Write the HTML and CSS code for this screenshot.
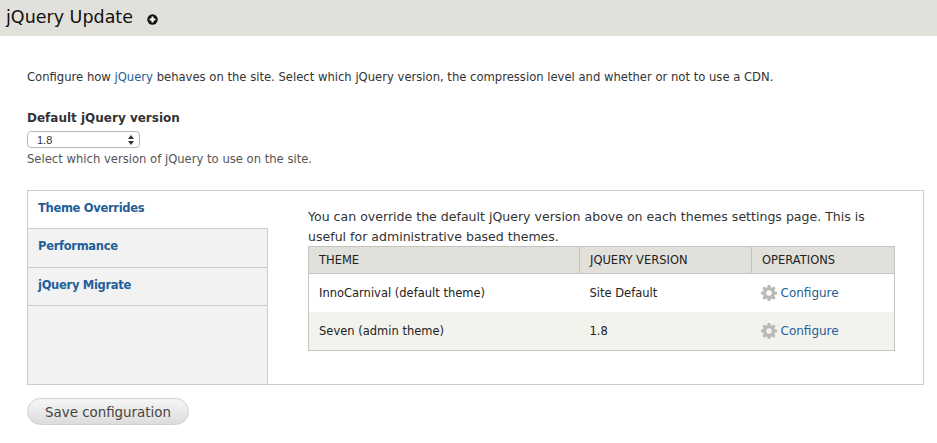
FILE: index.html
```html
<!DOCTYPE html>
<html lang="en">
<head>
<meta charset="utf-8">
<title>jQuery Update</title>
<link rel="stylesheet" href="styles.css">
</head>
<body>
<header class="page-header">
  <h1 class="page-title">jQuery Update</h1>
  <svg class="add-icon" width="11" height="11" viewBox="0 0 11 11"><circle cx="5.5" cy="5.5" r="5.2" fill="#111"/><path d="M5.5 2.6v5.8M2.6 5.5h5.8" stroke="#fff" stroke-width="2"/></svg>
</header>
<main class="content">
  <p class="intro">Configure how <a href="#">jQuery</a> behaves on the site. Select which jQuery version, the compression level and whether or not to use a CDN.</p>
  <div class="field">
    <label class="field-label">Default jQuery version</label>
    <div class="select-box"><span>1.8</span>
      <svg width="6" height="10" viewBox="0 0 6 10"><path d="M3 0l3 4H0zM3 10L0 6h6z" fill="#333"/></svg>
    </div>
    <div class="field-help">Select which version of jQuery to use on the site.</div>
  </div>
  <section class="tabs">
    <nav class="tab-list">
      <a class="tab tab-active" href="#">Theme Overrides</a>
      <a class="tab tab-second" href="#">Performance</a>
      <a class="tab tab-third" href="#">jQuery Migrate</a>
    </nav>
    <div class="tab-pane">
      <p class="pane-text">You can override the default jQuery version above on each themes settings page. This is useful for administrative based themes.</p>
      <table class="themes">
        <colgroup><col class="col-a"><col class="col-b"><col class="col-c"></colgroup>
        <thead><tr><th>THEME</th><th>JQUERY VERSION</th><th>OPERATIONS</th></tr></thead>
        <tbody>
          <tr><td>InnoCarnival (default theme)</td><td>Site Default</td><td>
            <a class="op" href="#"><svg class="gear" width="16" height="16" viewBox="0 0 16 16"><path d="M6.7 0h2.6l.4 2.3 1.2.5 1.9-1.3 1.8 1.8-1.3 1.9.5 1.2 2.2.4v2.6l-2.2.4-.5 1.2 1.3 1.9-1.8 1.8-1.9-1.3-1.2.5-.4 2.2H6.7l-.4-2.2-1.2-.5-1.9 1.3-1.8-1.8 1.3-1.9-.5-1.2L0 9.300V6.700l2.200-.4.5-1.200-1.300-1.900 1.800-1.800 1.900 1.300 1.200-.5z M8 5.200a2.800 2.800 0 1 0 0 5.600a2.800 2.800 0 1 0 0-5.600z" fill="#b9b9b6" fill-rule="evenodd"/></svg>Configure</a></td></tr>
          <tr class="even"><td>Seven (admin theme)</td><td>1.8</td><td>
            <a class="op" href="#"><svg class="gear" width="16" height="16" viewBox="0 0 16 16"><path d="M6.7 0h2.6l.4 2.3 1.2.5 1.9-1.3 1.8 1.8-1.3 1.9.5 1.2 2.2.4v2.6l-2.2.4-.5 1.2 1.3 1.9-1.8 1.8-1.9-1.3-1.2.5-.4 2.2H6.7l-.4-2.2-1.2-.5-1.9 1.3-1.8-1.8 1.3-1.9-.5-1.2L0 9.300V6.700l2.200-.4.5-1.200-1.300-1.900 1.800-1.800 1.900 1.300 1.200-.5z M8 5.200a2.800 2.800 0 1 0 0 5.600a2.800 2.800 0 1 0 0-5.600z" fill="#b9b9b6" fill-rule="evenodd"/></svg>Configure</a></td></tr>
        </tbody>
      </table>
    </div>
  </section>
  <button class="save" type="button">Save configuration</button>
</main>
</body>
</html>
```
FILE: styles.css
```css
* { box-sizing: border-box; }
html, body { margin: 0; padding: 0; }
body {
  width: 937px;
  height: 443px;
  overflow: hidden;
  background: #fff;
  color: #333;
  font-family: "DejaVu Sans", sans-serif;
  font-size: 11.600px;
}
a { color: #1f6098; text-decoration: none; }

.page-header {
  height: 36px;
  background: #e1e0da;
  display: flex;
  align-items: center;
  padding: 0 0 2px 6px;
}
.page-title {
  margin: 0;
  font-size: 17.500px;
  font-weight: 400;
  color: #111;
  line-height: 30px;
}
.add-icon { margin: 4px 0 0 14px; }

.content { padding: 34px 13px 0 27px; }
.intro { margin: 0; line-height: 14px; }

.field { margin-top: 26px; }
.field-label { display: block; font-weight: 700; font-size: 12px; line-height: 16px; }
.select-box {
  width: 113px;
  height: 17px;
  margin-top: 5px;
  border: 1px solid #b9b9b9;
  border-radius: 4px;
  background: #fff;
  display: flex;
  align-items: center;
  justify-content: space-between;
  padding: 0 5px 0 9px;
  font-family: "Liberation Sans", sans-serif;
  font-size: 11px;
}
.field-help { margin-top: 4px; line-height: 14px; color: #555; font-size: 11.600px; }

.tabs {
  margin-top: 24px;
  width: 897px;
  height: 195px;
  border: 1px solid #ccc;
  display: flex;
}
.tab-list {
  width: 240px;
  flex: none;
  background: #f2f2f2;
  border-right: 1px solid #ccc;
  display: flex;
  flex-direction: column;
}
.tab {
  display: block;
  padding-left: 10px;
  font-weight: 700;
  font-size: 11.500px;
  letter-spacing: -0.300px;
  color: #1f6098;
  border-bottom: 1px solid #ccc;
}
.tab-active {
  height: 38px;
  margin-right: -1px;
  background: #fff;
  line-height: 35px;
}
.tab-second { height: 39px; line-height: 34px; }
.tab-third { height: 38px; line-height: 34px; }

.tab-pane { flex: 1; padding: 16px 0 0 40px; }
.pane-text { margin: 0; width: 570px; line-height: 20px; font-size: 12.550px; color: #333; }
.themes {
  border-collapse: collapse;
  table-layout: fixed;
  width: 586px;
  margin-top: -1px;
  border: 1px solid #c4c4c0;
  font-size: 11.500px;
}
.col-a { width: 271px; }
.col-b { width: 172px; }
.col-c { width: 143px; }
.themes th {
  height: 27px;
  background: #e1e0da;
  border-bottom: 1px solid #c4c4c0;
  border-right: 1px solid #c4c4c0;
  padding: 0 10px;
  text-align: left;
  font-weight: 400;
  color: #222;
}
.themes th:last-child { border-right: 0; }
.themes td { height: 38px; padding: 0 10px; color: #222; }
.themes .even td { height: 39px; }
.even { background: #f3f3ee; }
.op { display: flex; align-items: center; font-size: 12px; }
.gear { margin-right: 4px; margin-left: -1px; }

.save {
  display: block;
  margin-top: 13px;
  width: 162px;
  height: 27px;
  padding: 1px 0 0;
  border: 1px solid #d0d0d0;
  border-radius: 14px;
  background: linear-gradient(#f6f6f6, #dcdcdc);
  color: #444;
  font-family: "DejaVu Sans", sans-serif;
  font-size: 13.400px;
}
```
